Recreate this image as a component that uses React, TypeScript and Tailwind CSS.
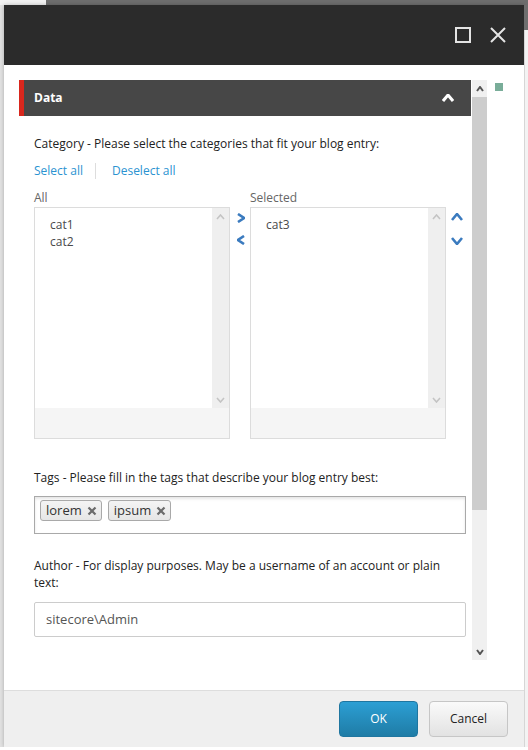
import React from "react";

const font = { fontFamily: '"Open Sans", "Noto Sans", sans-serif' };

function Chevron({ dir, color, w, h, sw }: { dir: "up" | "down" | "left" | "right"; color: string; w: number; h: number; sw: number }) {
  let pts = "";
  if (dir === "up") pts = `1,${h - 1} ${w / 2},1 ${w - 1},${h - 1}`;
  if (dir === "down") pts = `1,1 ${w / 2},${h - 1} ${w - 1},1`;
  if (dir === "right") pts = `1,1 ${w - 1},${h / 2} 1,${h - 1}`;
  if (dir === "left") pts = `${w - 1},1 1,${h / 2} ${w - 1},${h - 1}`;
  return (
    <svg width={w} height={h} viewBox={`0 0 ${w} ${h}`} className="block">
      <polyline points={pts} fill="none" stroke={color} strokeWidth={sw} strokeLinecap="butt" strokeLinejoin="miter" />
    </svg>
  );
}

function ListBox({ items }: { items: string[] }) {
  return (
    <div className="w-[196px] h-[232px] border border-[#dcdcdc] flex flex-col">
      <div className="flex flex-1 bg-white">
        <div className="flex-1 pl-[15px] pt-[8px] text-[12px] leading-[17px] text-[#4a4a4a]">
          {items.map((i) => (
            <div key={i}>{i}</div>
          ))}
        </div>
        <div className="w-[17px] bg-[#efefef] flex flex-col items-center justify-between pt-[6px] pb-[5px]">
          <Chevron dir="up" color="#c4c4c4" w={9} h={6} sw={1.6} />
          <Chevron dir="down" color="#c4c4c4" w={9} h={6} sw={1.6} />
        </div>
      </div>
      <div className="h-[30px] bg-[#f5f5f5]" />
    </div>
  );
}

function Tag({ text }: { text: string }) {
  return (
    <div className="h-[21px] flex items-center pl-[5px] pr-[4px] border border-[#a9a9a9] rounded-[3px] bg-gradient-to-b from-[#f4f4f4] to-[#e6e6e6] text-[13px] text-[#333]">
      <span className="leading-[17px]">{text}</span>
      <svg width="10" height="10" viewBox="0 0 10 10" className="ml-[5px] block">
        <path d="M1.5 1.5 L8.5 8.5 M8.5 1.5 L1.5 8.5" stroke="#6b6b6b" strokeWidth="2.2" />
      </svg>
    </div>
  );
}

export default function App() {
  return (
    <div className="w-[528px] h-[750px] overflow-hidden bg-white flex flex-col" style={font}>
      <div className="h-[5px] flex shrink-0">
        <div className="w-[46px] bg-[#f2f2f2]" />
        <div className="flex-1 bg-[#6e6e6e]" />
      </div>
      <div className="flex shrink-0">
        <div className="w-[4px] h-[742px] bg-[#e2e2e2]" />
        <div className="w-[520px] h-[742px] flex flex-col shadow-[0_0_4px_rgba(0,0,0,0.25)]">
          {/* Title bar */}
          <div className="h-[60px] bg-[#2b2b2b] flex items-center justify-end pr-[18px] gap-[19px] shrink-0">
            <svg width="16" height="16" viewBox="0 0 16 16" className="block">
              <rect x="1" y="1" width="14" height="14" fill="none" stroke="#e4e4e4" strokeWidth="2" />
            </svg>
            <svg width="16" height="16" viewBox="0 0 16 16" className="block">
              <path d="M1 1 L15 15 M15 1 L1 15" stroke="#e4e4e4" strokeWidth="2" />
            </svg>
          </div>
          {/* Body */}
          <div className="h-[625px] bg-white flex pt-[15px] pl-[15px] shrink-0">
            <div className="w-[452px] h-[580px] overflow-hidden flex flex-col">
              <div className="h-[36px] shrink-0 bg-[#474747] border-l-[5px] border-[#d8271d] flex items-center justify-between pl-[10px] pr-[17px]">
                <span className="text-white font-bold text-[12px]">Data</span>
                <Chevron dir="up" color="#ffffff" w={12} h={8} sw={3} />
              </div>
              <div className="pl-[15px] pr-[5px] flex flex-col">
                <div className="mt-[19px] text-[12px] leading-[17px] text-[#222]">
                  Category - Please select the categories that fit your blog entry:
                </div>
                <div className="mt-[10px] flex items-center text-[12px] leading-[17px] text-[#2b93d1]">
                  <span>Select all</span>
                  <div className="ml-[12px] w-px h-[16px] bg-[#dddddd]" />
                  <span className="ml-[16px]">Deselect all</span>
                </div>
                <div className="mt-[10px] flex text-[12px] leading-[17px] text-[#666]">
                  <div className="w-[216px]">All</div>
                  <div>Selected</div>
                </div>
                <div className="mt-[1px] flex">
                  <ListBox items={["cat1", "cat2"]} />
                  <div className="w-[20px] flex flex-col items-center pt-[6px] pl-[2px]">
                    <Chevron dir="right" color="#3b7bbf" w={8} h={10} sw={2.6} />
                    <div className="h-[12px]" />
                    <Chevron dir="left" color="#3b7bbf" w={8} h={10} sw={2.6} />
                  </div>
                  <ListBox items={["cat3"]} />
                  <div className="w-[20px] flex flex-col items-center pt-[6px] pl-[1px]">
                    <Chevron dir="up" color="#3b7bbf" w={12} h={8} sw={2.6} />
                    <div className="h-[16px]" />
                    <Chevron dir="down" color="#3b7bbf" w={12} h={8} sw={2.6} />
                  </div>
                </div>
                <div className="mt-[30px] text-[12px] leading-[17px] text-[#222]">
                  Tags - Please fill in the tags that describe your blog entry best:
                </div>
                <div className="mt-[10px] h-[38px] border border-[#a9a9a9] shadow-[inset_0_2px_3px_rgba(0,0,0,0.1)] flex items-start gap-[6px] pl-[5px] pt-[3px]">
                  <Tag text="lorem" />
                  <Tag text="ipsum" />
                </div>
                <div className="mt-[23px] text-[12px] leading-[17px] text-[#222]">
                  Author - For display purposes. May be a username of an account or plain text:
                </div>
                <div className="mt-[11px] h-[35px] border border-[#cccccc] rounded-[2px] flex items-center pl-[11px] text-[13px] text-[#555]">
                  sitecore\Admin
                </div>
              </div>
            </div>
            <div className="w-[15px] h-[580px] bg-[#f0f0f0] flex flex-col shrink-0 ml-[1px]">
              <div className="h-[17px] flex items-center justify-center">
                <Chevron dir="up" color="#555555" w={8} h={6} sw={2} />
              </div>
              <div className="h-[413px] bg-[#cdcdcd]" />
              <div className="flex-1" />
              <div className="h-[17px] flex items-center justify-center">
                <Chevron dir="down" color="#555555" w={8} h={6} sw={2} />
              </div>
            </div>
            <div className="ml-[8px] mt-[3px] w-[8px] h-[8px] bg-[#79ad99] shrink-0" />
          </div>
          {/* Footer */}
          <div className="flex-1 bg-[#efefef] border-t border-[#dddddd] flex items-center justify-end pr-[16px] gap-[11px]">
            <div className="w-[79px] h-[36px] rounded-[4px] border border-[#1f76a0] bg-gradient-to-b from-[#2c9fd4] to-[#1f7ca6] flex items-center justify-center text-white text-[12px]">
              OK
            </div>
            <div className="w-[79px] h-[36px] rounded-[4px] border border-[#c6c6c6] bg-gradient-to-b from-[#fafafa] to-[#e2e2e2] flex items-center justify-center text-[#222] text-[12px]">
              Cancel
            </div>
          </div>
        </div>
        <div className="w-[4px] h-[742px] flex flex-col">
          <div className="h-[25px] bg-[#6e6e6e]" />
          <div className="flex-1 bg-[#f3f3f3] border-l border-[#d6d6d6]" />
        </div>
      </div>
      <div className="flex-1 bg-white" />
    </div>
  );
}
